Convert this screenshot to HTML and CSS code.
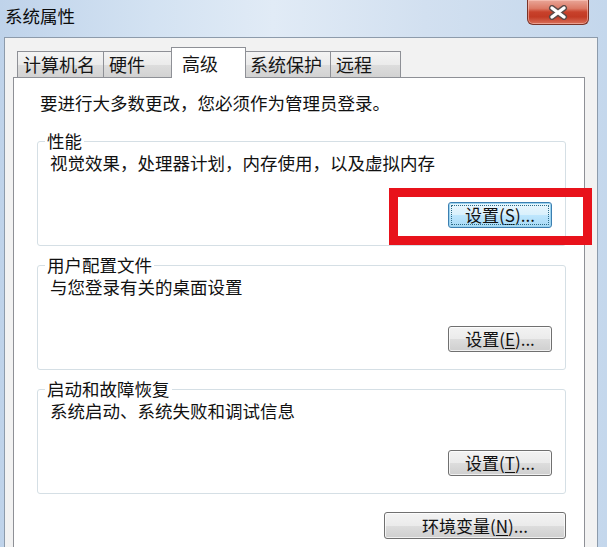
FILE: index.html
```html
<!DOCTYPE html>
<html lang="zh-CN">
<head>
<meta charset="utf-8">
<title>系统属性</title>
<link rel="stylesheet" href="styles.css">
</head>
<body>
<div class="window">
  <div class="titlebar">
    <span class="title">系统属性</span>
    <div class="close">
      <svg width="20" height="15" viewBox="0 0 20 15">
        <path d="M4 3 L16 12 M16 3 L4 12" stroke="#5a4a48" stroke-width="6" stroke-linecap="round"/>
        <path d="M4 3 L16 12 M16 3 L4 12" stroke="#ffffff" stroke-width="3.4" stroke-linecap="round"/>
      </svg>
    </div>
  </div>
  <div class="client">
    <div class="tabs">
      <div class="tab">计算机名</div>
      <div class="tab">硬件</div>
      <div class="tab active">高级</div>
      <div class="tab">系统保护</div>
      <div class="tab">远程</div>
    </div>
    <div class="panel">
      <p class="intro">要进行大多数更改，您必须作为管理员登录。</p>
      <fieldset class="group">
        <legend>性能</legend>
        <p class="desc">视觉效果，处理器计划，内存使用，以及虚拟内存</p>
        <div class="actions">
          <span class="highlight"><button class="btn focused">设置(<u>S</u>)...</button></span>
        </div>
      </fieldset>
      <fieldset class="group">
        <legend>用户配置文件</legend>
        <p class="desc">与您登录有关的桌面设置</p>
        <div class="actions">
          <button class="btn">设置(<u>E</u>)...</button>
        </div>
      </fieldset>
      <fieldset class="group">
        <legend>启动和故障恢复</legend>
        <p class="desc">系统启动、系统失败和调试信息</p>
        <div class="actions">
          <button class="btn">设置(<u>T</u>)...</button>
        </div>
      </fieldset>
      <div class="env-row">
        <button class="btn wide">环境变量(<u>N</u>)...</button>
      </div>
    </div>
  </div>
</div>
</body>
</html>
```
FILE: styles.css
```css
html, body {
  margin: 0;
  padding: 0;
}
body {
  width: 607px;
  height: 547px;
  overflow: hidden;
  background: linear-gradient(to right, #bfd3ea 0%, #d3e2f2 25%, #e1ebf6 45%, #d2e0f0 70%, #c4d7ec 100%);
  font-family: "Noto Sans CJK SC", "Noto Sans", sans-serif;
  color: #111;
}
.window {
  display: flex;
  flex-direction: column;
  height: 547px;
}
.titlebar {
  height: 37px;
  display: flex;
  align-items: flex-start;
  flex: none;
}
.title {
  font-size: 17.5px;
  line-height: 22px;
  margin: 5px 0 0 5px;
  color: #0c0c0c;
}
.close {
  margin-left: auto;
  margin-right: 18px;
  width: 62px;
  height: 25px;
  box-sizing: border-box;
  border: 1px solid #7a3327;
  border-top: none;
  border-radius: 0 0 6px 6px;
  background: linear-gradient(#e9a698 0%, #dc7a66 35%, #c8412b 50%, #c23a24 70%, #d9705a 100%);
  display: flex;
  align-items: center;
  justify-content: center;
  box-shadow: inset 0 0 0 1px rgba(255, 210, 200, 0.5);
}
.client {
  flex: 1;
  display: flex;
  flex-direction: column;
  margin: 0 9px 0 4px;
  border: 1px solid #8d9bab;
  border-bottom: none;
  background: #f2f2f2;
  padding: 9px 12px 0 8px;
  min-height: 0;
}
.tabs {
  display: flex;
  align-items: flex-end;
  height: 30px;
  padding-left: 4px;
  flex: none;
}
.tab {
  box-sizing: border-box;
  height: 26px;
  min-width: 71px;
  padding: 0 8px 0 5px;
  border: 1px solid #8e9096;
  border-bottom: none;
  margin-right: -1px;
  background: linear-gradient(#f4f4f4 0%, #ebebeb 50%, #dddddd 51%, #d2d2d2 100%);
  font-size: 18px;
  line-height: 25px;
  white-space: nowrap;
  color: #151515;
}
.tab.active {
  height: 31px;
  min-width: 75px;
  margin: 0 -2px -1px -2px;
  padding: 0 8px 0 10px;
  background: #ffffff;
  line-height: 30px;
  position: relative;
  z-index: 1;
}
.panel {
  flex: 1;
  border: 1px solid #8e9096;
  border-bottom: none;
  background: #ffffff;
  display: flex;
  flex-direction: column;
}
.intro {
  margin: 13px 0 0 26px;
  font-size: 17.5px;
  line-height: 24px;
}
.group {
  margin: 16px 18px 0 23px;
  padding: 0 13px 17px 12px;
  border: 1px solid #d5dfe5;
  border-radius: 3px;
  min-inline-size: auto;
}
.group + .group {
  margin-top: 9px;
}
.group legend {
  font-size: 17.5px;
  line-height: 20px;
  padding: 0 2px;
  margin-left: -5px;
}
.desc {
  margin: 1px 0 0;
  font-size: 17.5px;
  line-height: 22px;
}
.actions {
  display: flex;
  justify-content: flex-end;
  margin-top: 28px;
}
.highlight {
  position: relative;
  display: flex;
}
.highlight::after {
  content: "";
  position: absolute;
  left: -59px;
  right: -40px;
  top: -14px;
  bottom: -17px;
  border: 9px solid #e8121b;
  pointer-events: none;
}
.btn {
  width: 104px;
  height: 26px;
  box-sizing: border-box;
  padding: 0;
  border: 1px solid #707070;
  border-radius: 3px;
  background: linear-gradient(#f3f3f3 0%, #ebebeb 50%, #dddddd 51%, #cfcfcf 100%);
  font-family: "Noto Sans CJK SC", "Noto Sans", sans-serif;
  font-size: 17px;
  line-height: 24px;
  color: #111;
  white-space: nowrap;
  position: relative;
  box-shadow: inset 0 0 0 1px rgba(255, 255, 255, 0.7);
}
.btn u {
  text-decoration-thickness: 1px;
  text-underline-offset: 2px;
}
.btn.focused {
  border-color: #3c7fb1;
  background: linear-gradient(#eaf6fd 0%, #d9f0fc 50%, #bee6fd 51%, #a7d9f5 100%);
  box-shadow: inset 0 0 0 1px #9bd3ef;
}
.btn.focused::after {
  content: "";
  position: absolute;
  inset: 2px;
  border: 1px dotted #2d6b86;
  border-radius: 1px;
}
.env-row {
  display: flex;
  justify-content: flex-end;
  margin: 18px 18px 0 0;
}
.btn.wide {
  width: 182px;
  height: 27px;
}
```
